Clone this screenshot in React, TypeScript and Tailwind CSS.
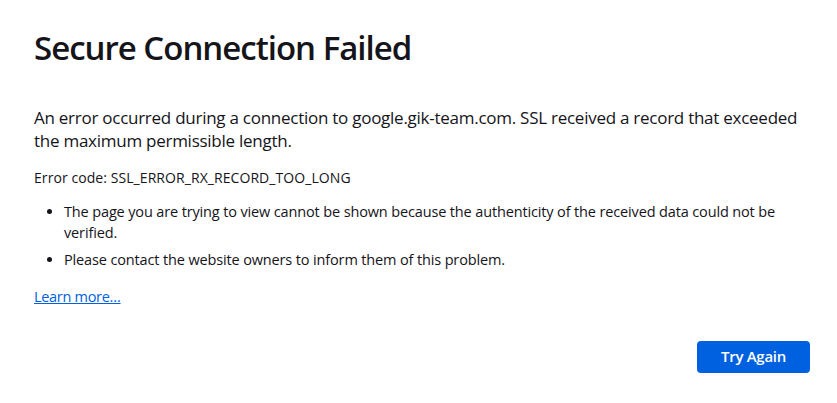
import React from 'react';

export default function App() {
    return (
        <div className="min-h-screen bg-white text-[#15141a]" style={{ fontFamily: '"Open Sans", "Noto Sans", sans-serif' }}>
            <div className="w-[776px] pl-[34px] pt-[28px] box-content">
                <h1 className="text-[33px] leading-[40px] font-semibold tracking-[-1px]">Secure Connection Failed</h1>

                <p className="mt-[38px] text-[17px] leading-[23px] tracking-[-0.26px]">
                    An error occurred during a connection to google.gik-team.com. SSL received a record that exceeded the maximum permissible length.
                </p>

                <p className="mt-[16px] text-[14px] leading-[20px] tracking-[0.07px]">Error code: SSL_ERROR_RX_RECORD_TOO_LONG</p>

                <ul className="mt-[14px] list-disc pl-[30px] text-[14.5px] leading-[20.5px] tracking-[-0.14px] space-y-[7px]">
                    <li>The page you are trying to view cannot be shown because the authenticity of the received data could not be verified.</li>
                    <li>Please contact the website owners to inform them of this problem.</li>
                </ul>

                <a href="#" className="inline-block mt-[16px] text-[14.5px] leading-[20px] text-[#0061e0] underline tracking-[-0.3px]">Learn more…</a>

                <div className="flex justify-end mt-[33px]">
                    <button className="w-[113px] h-[32px] rounded-[4px] bg-[#0061e0] text-white text-[15px] font-semibold tracking-[-0.3px]">Try Again</button>
                </div>
            </div>
        </div>
    );
}
